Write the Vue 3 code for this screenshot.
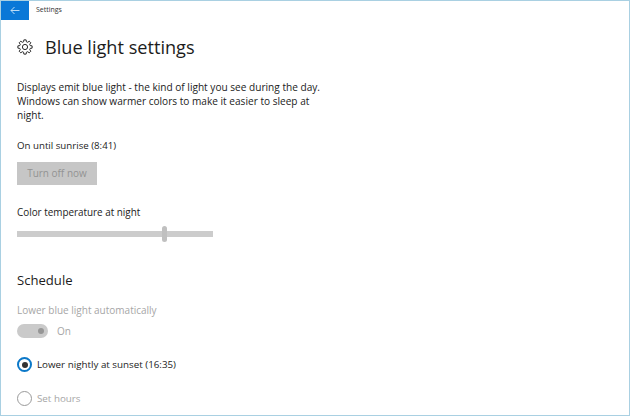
<script setup>
const radios = [
  { label: 'Lower nightly at sunset (16:35)', on: true },
  { label: 'Set hours', on: false },
]

// Eight-toothed gear outline, built from polar coordinates.
const gearPath = (() => {
  const c = 8, outer = 7.2, inner = 5.4, teeth = 8
  const pts = []
  for (let i = 0; i < teeth; i++) {
    const a = (i * 2 * Math.PI) / teeth
    const step = (2 * Math.PI) / teeth
    for (const [r, t] of [[inner, -0.34], [outer, -0.2], [outer, 0.2], [inner, 0.34]]) {
      const ang = a + t * step
      pts.push(`${(c + r * Math.cos(ang)).toFixed(2)} ${(c + r * Math.sin(ang)).toFixed(2)}`)
    }
  }
  return 'M' + pts.join('L') + 'Z'
})()
</script>

<template>
  <div class="window">
    <header class="titlebar">
      <div class="back">
        <svg width="10" height="9" viewBox="0 0 10 9" fill="none" stroke="#cfe6f8" stroke-width="0.9">
          <path d="M9.500 4.500H1M4.500 1 1 4.500 4.500 8" />
        </svg>
      </div>
      <span class="apptitle">Settings</span>
    </header>
    <main class="content">
      <div class="heading">
        <svg class="gear" width="16" height="16" viewBox="0 0 16 16" fill="none" stroke="#2a2a2a" stroke-width="1" stroke-linejoin="round">
          <path :d="gearPath" />
          <circle cx="8" cy="8" r="2.600" />
        </svg>
        <h1>Blue light settings</h1>
      </div>
      <p class="desc">Displays emit blue light - the kind of light you see during the day. Windows can show warmer colors to make it easier to sleep at night.</p>
      <p class="status">On until sunrise (8:41)</p>
      <button class="turnoff" disabled>Turn off now</button>
      <p class="sliderlabel">Color temperature at night</p>
      <div class="slider"><span class="thumb"></span></div>
      <h2>Schedule</h2>
      <p class="autolabel">Lower blue light automatically</p>
      <div class="toggle-row">
        <span class="toggle"><span class="knob"></span></span>
        <span class="toggle-text">On</span>
      </div>
      <div v-for="r in radios" :key="r.label" class="radio-row" :class="{ active: r.on }">
        <span class="radio"><span v-if="r.on" class="dot"></span></span>
        <span>{{ r.label }}</span>
      </div>
    </main>
  </div>
</template>

<style scoped>
.window {
  width: 630px;
  height: 416px;
  box-sizing: border-box;
  border: 1px solid #a9d0e2;
  border-top: 0;
  background: #fff;
  font-family: "Open Sans", "Noto Sans", sans-serif;
  color: #222;
  overflow: hidden;
}
.titlebar {
  display: flex;
  align-items: center;
  height: 19px;
  border-top: 1px solid #a9d0e2;
}
.back {
  width: 28px;
  height: 19px;
  background: #0a78d7;
  display: flex;
  align-items: center;
  justify-content: center;
}
.apptitle {
  margin-left: 7px;
  margin-bottom: 2px;
  font-size: 7px;
  color: #333;
}
.content {
  padding: 0 0 0 16px;
}
.heading {
  display: flex;
  align-items: center;
  height: 28px;
  margin-top: 13px;
}
.gear {
  margin-right: 12px;
}
h1 {
  margin: 0;
  font-size: 18.150px;
  font-weight: 400;
  color: #1c1c1c;
}
.desc {
  width: 320px;
  margin: 18.500px 0 0;
  font-size: 10.100px;
  line-height: 14.200px;
}
.status {
  margin: 15.500px 0 0;
  font-size: 9.700px;
  line-height: 15px;
}
.turnoff {
  display: block;
  width: 80px;
  height: 23px;
  margin-top: 9px;
  padding: 0;
  border: 0;
  background: #c6c6c6;
  color: #939393;
  font: inherit;
  font-size: 10px;
}
.sliderlabel {
  margin: 20px 0 0;
  font-size: 9.900px;
  line-height: 15px;
}
.slider {
  position: relative;
  width: 196px;
  height: 6px;
  margin-top: 11.500px;
  background: #cccccc;
}
.thumb {
  position: absolute;
  left: 145px;
  top: -5px;
  width: 5px;
  height: 16px;
  border-radius: 3px;
  background: #c0c0c0;
}
h2 {
  margin: 32.500px 0 0;
  font-size: 13.100px;
  line-height: 20px;
  font-weight: 400;
  color: #1c1c1c;
}
.autolabel {
  margin: 13px 0 0;
  font-size: 10px;
  line-height: 15px;
  color: #a6a6a6;
}
.toggle-row {
  display: flex;
  align-items: center;
  gap: 9px;
  margin-top: 6px;
  font-size: 10px;
  color: #a6a6a6;
}
.toggle {
  display: flex;
  align-items: center;
  justify-content: flex-end;
  box-sizing: border-box;
  width: 31px;
  height: 14px;
  padding-right: 4px;
  border-radius: 7px;
  background: #cacaca;
}
.knob {
  width: 6px;
  height: 6px;
  border-radius: 50%;
  background: #969696;
}
.radio-row {
  display: flex;
  align-items: center;
  gap: 5px;
  height: 16px;
  margin-top: 19px;
  font-size: 9.800px;
  color: #a6a6a6;
}
.radio-row + .radio-row {
  margin-top: 18px;
}
.radio-row.active {
  color: #222;
}
.radio {
  display: flex;
  align-items: center;
  justify-content: center;
  box-sizing: border-box;
  width: 15px;
  height: 15px;
  border: 1.500px solid #9a9a9a;
  border-radius: 50%;
}
.active .radio {
  border: 2px solid #0b78c8;
}
.dot {
  width: 6px;
  height: 6px;
  border-radius: 50%;
  background: #333;
}
</style>
